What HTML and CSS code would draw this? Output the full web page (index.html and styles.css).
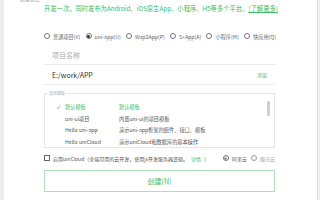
FILE: index.html
```html
<!DOCTYPE html>
<html lang="zh-CN">
<head>
<meta charset="utf-8">
<link rel="stylesheet" href="styles.css">
</head>
<body>
<div class="panel">
  <div class="title"><span>新建项目</span></div>
  <div class="content">
    <div class="intro">开发一次，同时发布为Android、iOS原生App、小程序、H5等多个平台。<span class="more">[了解更多]</span></div>
    <div class="types">
      <span class="opt"><i class="radio"></i>普通项目(V)</span>
      <span class="opt"><i class="radio on"></i>uni-app(U)</span>
      <span class="opt"><i class="radio"></i>Wap2App(P)</span>
      <span class="opt"><i class="radio"></i>5+App(A)</span>
      <span class="opt"><i class="radio"></i>小程序(M)</span>
      <span class="opt"><i class="radio"></i>快应用(Q)</span>
    </div>
    <div class="field"><span class="placeholder">项目名称</span></div>
    <div class="field"><span class="value">E:/work/APP</span><span class="browse">浏览</span></div>
    <div class="box">
      <span class="legend">选择模板</span>
      <div class="list">
        <div class="row sel"><span class="check">✓</span><span class="c1">默认模板</span><span class="c2">默认模板</span></div>
        <div class="row"><span class="check"></span><span class="c1">uni-ui项目</span><span class="c2">内置uni-ui的项目模板</span></div>
        <div class="row"><span class="check"></span><span class="c1">Hello uni-app</span><span class="c2">演示uni-app框架的组件、接口、模板</span></div>
        <div class="row"><span class="check"></span><span class="c1">Hello uniCloud</span><span class="c2">演示uniCloud和数据库的基本操作</span></div>
      </div>
      <span class="thumb"></span>
    </div>
    <div class="cloud">
      <span class="opt"><i class="checkbox"></i>启用uniCloud（全端可用的云开发，使用js开发服务器逻辑。<span class="link">详情</span>）</span>
      <span class="providers">
        <span class="opt"><i class="radio on small"></i>阿里云</span>
        <span class="opt dim"><i class="radio"></i>腾讯云</span>
      </span>
    </div>
    <div class="create">创建(N)</div>
  </div>
</div>
</body>
</html>
```

FILE: styles.css
```css
html, body {
  margin: 0;
  padding: 0;
}
body {
  width: 320px;
  height: 200px;
  overflow: hidden;
  background: #efedea;
  font-family: "Noto Sans CJK SC", "Noto Sans", sans-serif;
}
.panel {
  margin-left: 4px;
  width: 313px;
  height: 200px;
  background: #ffffff;
  border-right: 1px solid #dedede;
  overflow: hidden;
}
.title {
  height: 2px;
  overflow: hidden;
  padding-left: 16px;
}
.title span {
  display: block;
  margin-top: -3px;
  font-size: 5px;
  line-height: 6px;
  color: #999;
}
.content {
  margin-left: 40px;
  width: 231px;
}
.intro {
  margin-top: 3px;
  height: 8px;
  line-height: 8px;
  font-size: 6.3px;
  color: #40bb5f;
  white-space: nowrap;
}
.more {
  text-decoration: underline;
}
.types {
  margin-top: 19px;
  width: 232px;
  height: 8px;
  display: flex;
  justify-content: space-between;
  align-items: center;
  font-size: 5.2px;
  color: #666;
  white-space: nowrap;
}
.opt {
  display: inline-flex;
  align-items: center;
  gap: 3px;
  white-space: nowrap;
}
.radio {
  width: 4px;
  height: 4px;
  border: 1px solid #777;
  border-radius: 50%;
  box-sizing: content-box;
  display: inline-flex;
  align-items: center;
  justify-content: center;
  flex: none;
}
.radio.on::after {
  content: "";
  width: 3px;
  height: 3px;
  border-radius: 50%;
  background: #333;
}
.radio.small.on::after {
  background: #999;
}
.field {
  height: 20px;
  box-sizing: border-box;
  border-bottom: 1px solid #ebebeb;
  padding: 0 8px;
  display: flex;
  align-items: center;
  justify-content: space-between;
  font-size: 7px;
}
.types + .field {
  margin-top: 5px;
}
.placeholder {
  color: #aaa;
}
.value {
  color: #333;
}
.browse {
  font-size: 5px;
  color: #40bb5f;
}
.box {
  margin-top: 8px;
  height: 55px;
  box-sizing: border-box;
  border: 1px solid #e6e6e6;
  position: relative;
}
.legend {
  position: absolute;
  top: -3px;
  left: 3px;
  padding: 0 1px;
  background: #fff;
  font-size: 4px;
  line-height: 5px;
  color: #aaa;
}
.list {
  height: 53px;
  overflow: hidden;
  padding-top: 7px;
  box-sizing: border-box;
}
.row {
  display: grid;
  grid-template-columns: 8px 54px 1fr;
  padding-left: 12px;
  height: 11.5px;
  line-height: 11.5px;
  font-size: 5.2px;
  color: #555;
  white-space: nowrap;
}
.row.sel {
  color: #40bb5f;
}
.check {
  font-size: 5px;
  color: #666;
}
.thumb {
  position: absolute;
  right: 4px;
  top: 7px;
  width: 3px;
  height: 15px;
  background: #cfcfcf;
  border-radius: 1px;
}
.cloud {
  margin-top: 6px;
  height: 8px;
  display: flex;
  align-items: center;
  justify-content: space-between;
  font-size: 5px;
  color: #555;
}
.checkbox {
  width: 4px;
  height: 4px;
  border: 1px solid #666;
  box-sizing: content-box;
  flex: none;
}
.link {
  color: #40bb5f;
}
.providers {
  display: flex;
  gap: 4px;
  color: #666;
}
.dim {
  color: #aaa;
}
.dim .radio {
  border-color: #999;
}
.create {
  margin-top: 8px;
  height: 22px;
  box-sizing: border-box;
  border: 1px solid #ace0b9;
  display: flex;
  align-items: center;
  justify-content: center;
  font-size: 7px;
  color: #40bb5f;
}
```
